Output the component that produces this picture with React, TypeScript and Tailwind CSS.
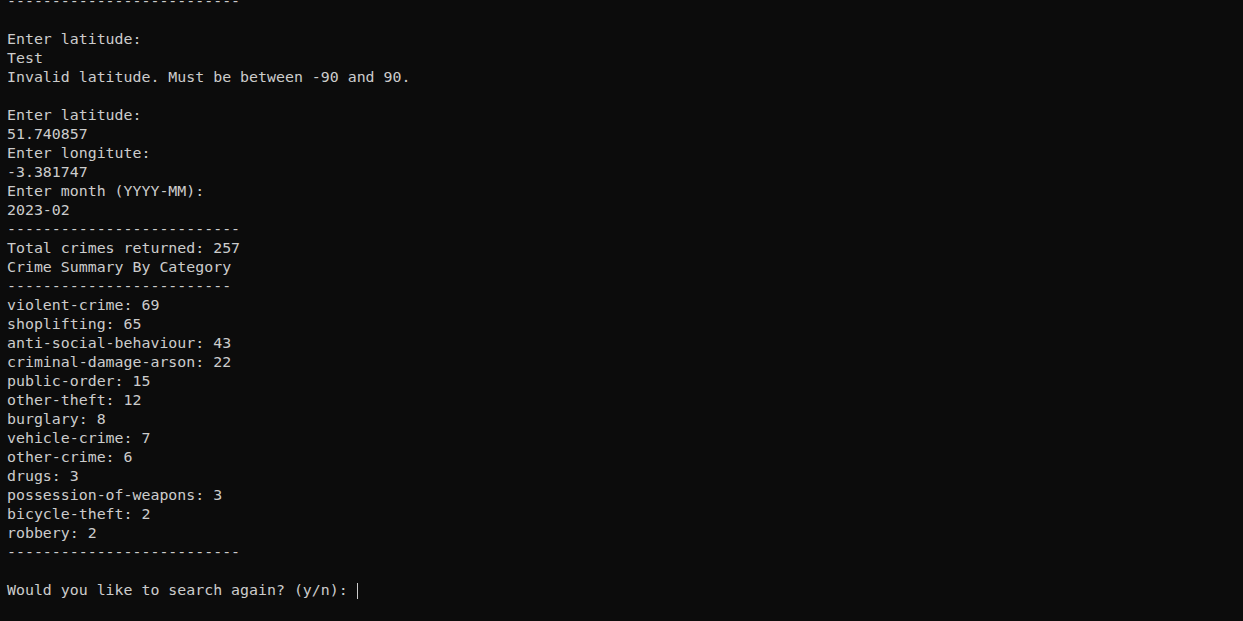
import React from "react";

const lines: string[] = [
  "--------------------------",
  "",
  "Enter latitude:",
  "Test",
  "Invalid latitude. Must be between -90 and 90.",
  "",
  "Enter latitude:",
  "51.740857",
  "Enter longitute:",
  "-3.381747",
  "Enter month (YYYY-MM):",
  "2023-02",
  "--------------------------",
  "Total crimes returned: 257",
  "Crime Summary By Category",
  "-------------------------",
  "violent-crime: 69",
  "shoplifting: 65",
  "anti-social-behaviour: 43",
  "criminal-damage-arson: 22",
  "public-order: 15",
  "other-theft: 12",
  "burglary: 8",
  "vehicle-crime: 7",
  "other-crime: 6",
  "drugs: 3",
  "possession-of-weapons: 3",
  "bicycle-theft: 2",
  "robbery: 2",
  "--------------------------",
  "",
];

const App: React.FC = () => {
  return (
    <div className="w-[1243px] h-[621px] overflow-hidden bg-[#0c0c0c] text-[#cccccc]">
      <div className="-mt-[8px] px-[7px] font-['DejaVu_Sans_Mono',monospace] text-[14.9px] leading-[19px] whitespace-pre">
        {lines.map((line, i) => (
          <div key={i} className="h-[19px]">
            {line}
          </div>
        ))}
        <div className="h-[19px] flex items-center">
          <span>Would you like to search again? (y/n): </span>
          <span className="inline-block w-px h-[16px] bg-[#cccccc]" />
        </div>
      </div>
    </div>
  );
};

export default App;
